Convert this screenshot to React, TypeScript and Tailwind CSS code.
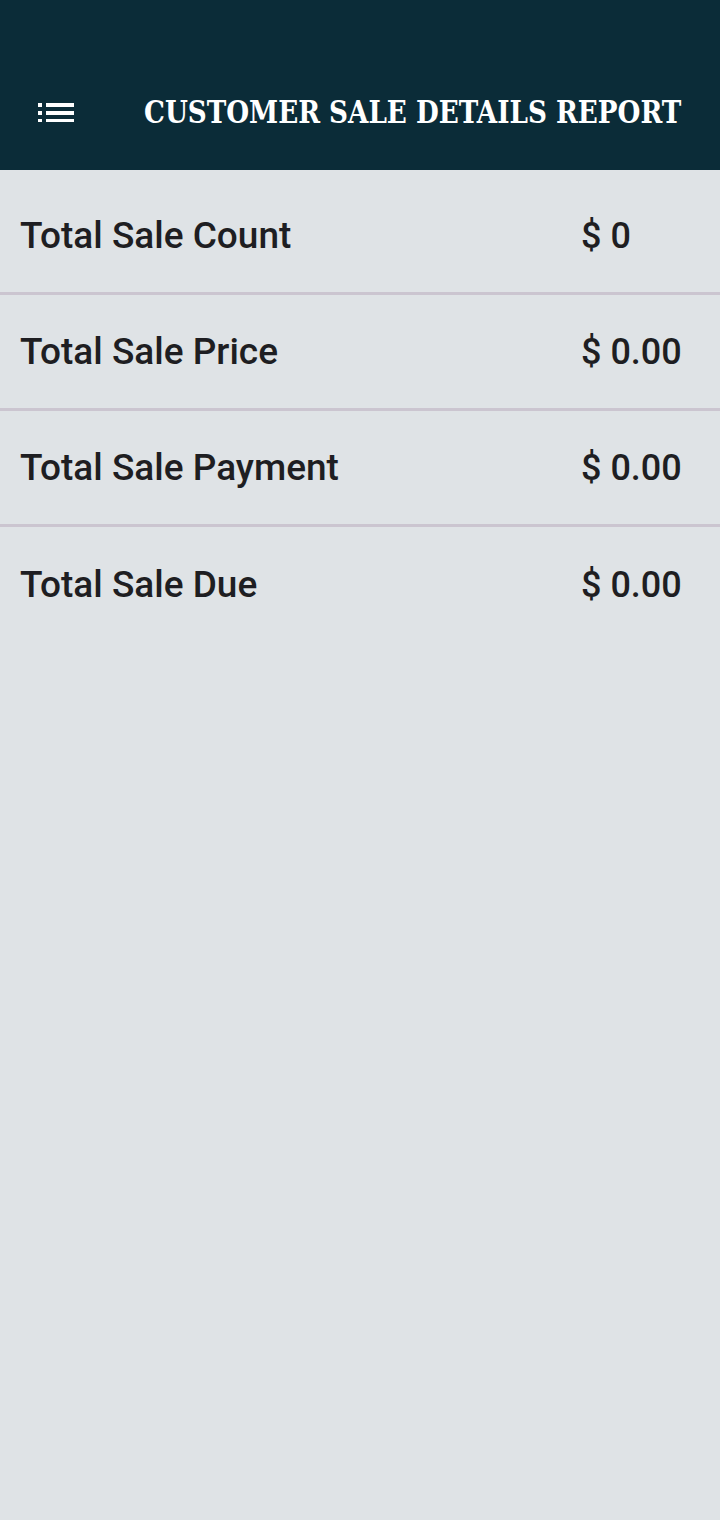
import React from "react";

const rows = [
  { label: "Total Sale Count", value: "$ 0" },
  { label: "Total Sale Price", value: "$ 0.00" },
  { label: "Total Sale Payment", value: "$ 0.00" },
  { label: "Total Sale Due", value: "$ 0.00" },
];

export default function App() {
  return (
    <div className="w-[720px] h-[1520px] bg-[#dfe3e6] flex flex-col overflow-hidden" style={{ fontFamily: "Roboto, 'Liberation Sans', sans-serif" }}>
      <div className="h-[170px] bg-[#0b2c38] flex items-end pb-[40px] shrink-0">
        <div className="flex items-center h-[36px] w-full">
          <svg width="36" height="20" viewBox="0 0 36 20" className="ml-[38px] block shrink-0" fill="#ffffff">
            <rect x="0" y="1" width="4" height="4" />
            <rect x="8" y="1" width="28" height="4" />
            <rect x="0" y="9" width="4" height="4" />
            <rect x="8" y="9" width="28" height="4" />
            <rect x="0" y="17" width="4" height="4" />
            <rect x="8" y="17" width="28" height="4" />
          </svg>
          <div
            className="ml-[70px] text-white text-[32px] font-bold leading-none whitespace-nowrap origin-left scale-x-[0.82]"
            style={{ fontFamily: "'DejaVu Serif', serif" }}
          >
            CUSTOMER SALE DETAILS REPORT
          </div>
        </div>
      </div>
      <div className="pt-[9px] flex flex-col">
        {rows.map((r, i) => (
          <div
            key={r.label}
            className={`h-[116px] flex items-center text-[#1e1e22] font-medium ${i < rows.length - 1 ? "border-b-[3px] border-[#cbc5d0]" : ""}`}
          >
            <div className="pl-[20px] flex-1 text-[37px]">{r.label}</div>
            <div className="w-[139px] shrink-0 text-[36px]">{r.value}</div>
          </div>
        ))}
      </div>
    </div>
  );
}
